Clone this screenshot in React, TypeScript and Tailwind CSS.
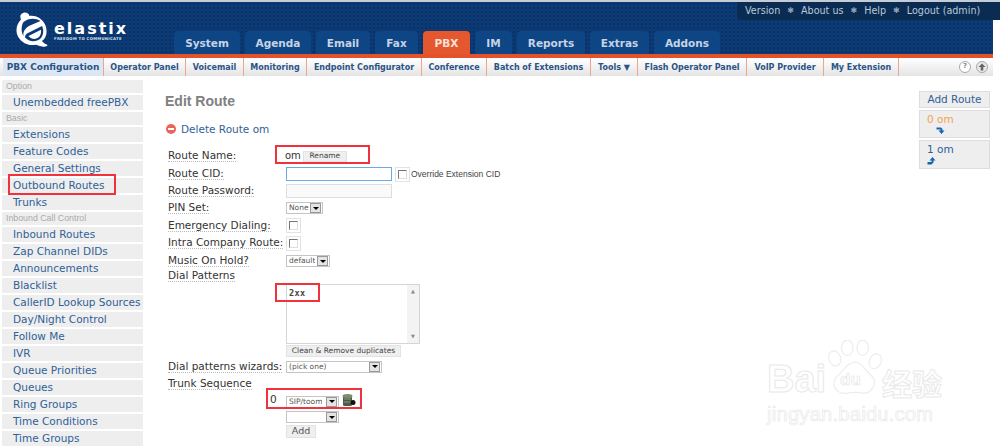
const font = { fontFamily: '"DejaVu Sans", Verdana, sans-serif' };

const tabs = [
  { t: "System", w: "w-[66px]" },
  { t: "Agenda", w: "w-[66px]" },
  { t: "Email", w: "w-[54px]" },
  { t: "Fax", w: "w-[43px]" },
  { t: "PBX", w: "w-[47px]", on: true },
  { t: "IM", w: "w-[37px]" },
  { t: "Reports", w: "w-[68px]" },
  { t: "Extras", w: "w-[59px]" },
  { t: "Addons", w: "w-[66px]" },
];

const subnav = [
  { t: "PBX Configuration", w: "w-[101px]", on: true },
  { t: "Operator Panel", w: "w-[82px]" },
  { t: "Voicemail", w: "w-[58px]" },
  { t: "Monitoring", w: "w-[63px]" },
  { t: "Endpoint Configurator", w: "w-[115px]" },
  { t: "Conference", w: "w-[65px]" },
  { t: "Batch of Extensions", w: "w-[104px]" },
  { t: "Tools ▼", w: "w-[47px]" },
  { t: "Flash Operator Panel", w: "w-[109px]" },
  { t: "VoIP Provider", w: "w-[77px]" },
  { t: "My Extension", w: "w-[75px]" },
];

type Side = { t: string; h?: boolean };
const side: Side[] = [
  { t: "Option", h: true },
  { t: "Unembedded freePBX" },
  { t: "Basic", h: true },
  { t: "Extensions" },
  { t: "Feature Codes" },
  { t: "General Settings" },
  { t: "Outbound Routes" },
  { t: "Trunks" },
  { t: "Inbound Call Control", h: true },
  { t: "Inbound Routes" },
  { t: "Zap Channel DIDs" },
  { t: "Announcements" },
  { t: "Blacklist" },
  { t: "CallerID Lookup Sources" },
  { t: "Day/Night Control" },
  { t: "Follow Me" },
  { t: "IVR" },
  { t: "Queue Priorities" },
  { t: "Queues" },
  { t: "Ring Groups" },
  { t: "Time Conditions" },
  { t: "Time Groups" },
];

function Logo() {
  return (
    <div className="flex items-start ml-[16px] mt-[10px] h-[36px]">
      <svg width="32" height="35" viewBox="0 0 32 35" className="shrink-0">
        <path d="M6 1.500 C9 -0.500 13 1 13.500 4 C21 3 28 8 30 15 C31.500 21 30 26 26 29 C27 31 30 32 31.500 33 C31.500 34.500 29 35 26 34.500 C24 34.300 22 33.500 20 32.700 C12 34.500 3.500 30 1 22 C-0.500 16 1.500 11 5 7.500 C4 5 4 3 6 1.500Z" fill="#ffffff" />
        <path d="M7.500 10 C5 14 5 20 7.500 24 C6.500 19 10 15.500 14 13.500 L24.500 9 C19.500 5.500 12 6 7.500 10Z" fill="#0c3a76" />
        <path d="M9 25.500 C13 30 20 30.500 24.500 26.500 C27.500 23.500 28 18 26 14 L11 21.500 C9.800 22.300 9 23.500 9 25.500Z" fill="#0c3a76" />
        <path d="M12.500 24 L25 17.800 C25.500 21 24.500 24 22 25.800 C19 27.800 15 27 12.500 24Z" fill="#ffffff" />
      </svg>
      <div className="ml-[6px] mt-[9px] flex flex-col text-white">
        <div className="text-[16px] font-bold leading-[15px] tracking-[2px]">elastix</div>
        <div className="text-[3.8px] font-bold leading-[5px] tracking-[0.3px] text-[#d5e0ee] whitespace-nowrap">FREEDOM TO COMMUNICATE</div>
      </div>
    </div>
  );
}

function Select({ w, text }: { w: string; text: string }) {
  return (
    <div className={`${w} h-[12px] flex items-center justify-between border border-[#c4c4c4] bg-white pl-[2px] text-[7.5px] text-[#555] whitespace-nowrap`}>
      <span className="overflow-hidden">{text}</span>
      <span className="w-[11px] h-[10px] shrink-0 mr-px border border-[#999] bg-[#e4e4e4] flex items-center justify-center">
        <span className="w-0 h-0 border-x-[3px] border-x-transparent border-t-[3px] border-t-black" />
      </span>
    </div>
  );
}

function Box() {
  return (
    <span className="w-[15px] h-[15px] border border-[#e2e2e2] flex items-center justify-center bg-white">
      <span className="w-[9px] h-[9px] border border-t-[#777] border-l-[#777] border-r-[#ddd] border-b-[#ddd] bg-white" />
    </span>
  );
}

function Label({ children }: { children: string }) {
  return <span className="border-b border-dotted border-[#bbb] leading-[12px] text-[#333]">{children}</span>;
}

function Row({ h, label, children }: { h: string; label?: string; children?: React.ReactNode }) {
  return (
    <div className={`${h} flex items-center`}>
      <div className="w-[118px] shrink-0 whitespace-nowrap">{label && <Label>{label}</Label>}</div>
      {children}
    </div>
  );
}

function Paw() {
  return (
    <svg width="54" height="58" viewBox="0 0 56 60" className="absolute left-0 top-0" fill="none" stroke="#ececec" strokeWidth="1.2">
      <ellipse cx="7" cy="19" rx="6" ry="8" transform="rotate(-20 7 19)" />
      <ellipse cx="20" cy="8" rx="6" ry="8" />
      <ellipse cx="36" cy="8" rx="6" ry="8" />
      <ellipse cx="49" cy="22" rx="6" ry="8" transform="rotate(25 49 22)" />
      <path d="M28 23 C36 23 38 32 45 37 C52 43 46 56 36 55 C30 54 25 54 20 55 C9 57 2 46 9 38 C16 33 19 23 28 23Z" />
    </svg>
  );
}

export default function App() {
  return (
    <div className="relative w-[1000px] h-[447px] overflow-hidden bg-white" style={font}>
      {/* header */}
      <div className="w-[993px]">
        <div className="h-[2px] w-[1000px] bg-[#c5ccd6]" />
        <div className="h-[52px] flex bg-[#0c3a76] bg-[radial-gradient(#0a3162_1px,transparent_1px)] bg-[length:4px_4px]">
          <div className="w-[174px] shrink-0"><Logo /></div>
          <div className="flex items-end gap-[5px] self-end">
            {tabs.map((x) => (
              <div
                key={x.t}
                className={`${x.w} h-[23px] rounded-t-[4px] flex items-center justify-center pt-[3px] text-[10.5px] font-bold ${
                  x.on ? "bg-[#e4572f] text-[#fbe2d6]" : "bg-[#0e4585] text-[#c6d4e4]"
                }`}
              >
                {x.t}
              </div>
            ))}
          </div>
        </div>
        <div className="h-[4px] bg-[#e4522c]" />
        <div className="h-[18px] flex bg-[linear-gradient(#ffffff,#e4e4e4)]">
          <div className="w-[3px]" />
          {subnav.map((x) => (
            <div
              key={x.t}
              className={`${x.w} h-[18px] pt-[1px] shrink-0 flex items-center justify-center whitespace-nowrap border-r border-[#f0a48e] font-bold text-[#2a5487] ${
                x.on ? "bg-[#dce7f3] text-[9px]" : "text-[8px]"
              }`}
            >
              {x.t}
            </div>
          ))}
          <div className="flex-1 flex items-center justify-end gap-[5px] pr-[5px] pb-[1px]">
            <span className="w-[12px] h-[12px] rounded-full border border-[#aaa] bg-white flex items-center justify-center text-[7px] font-bold leading-none text-[#888]">?</span>
            <span className="w-[12px] h-[12px] rounded-full border border-[#aaa] bg-[#e8e8e8] flex items-center justify-center">
              <svg width="8" height="8" viewBox="0 0 8 8"><path d="M4 0.500 L7.500 4 H5.300 V7.500 H2.700 V4 H0.500Z" fill="#666" /></svg>
            </span>
          </div>
        </div>
      </div>

      {/* top-right menu */}
      <div className="absolute right-0 top-[2px] w-[263px] h-[18px] bg-[#0a2c52] rounded-bl-[5px] flex items-center pl-[8px] gap-[7px] text-[9.6px] text-[#b8c9dc]">
        <span>Version</span><span className="text-[8px] text-[#8fa3b8]">✱</span>
        <span>About us</span><span className="text-[8px] text-[#8fa3b8]">✱</span>
        <span>Help</span><span className="text-[8px] text-[#8fa3b8]">✱</span>
        <span>Logout (admin)</span>
      </div>

      {/* body */}
      <div className="flex">
        <aside className="w-[141px] ml-[2px] pt-[4px] shrink-0 flex flex-col gap-[2px]">
          {side.map((x) =>
            x.h ? (
              <div key={x.t} className="h-[13px] bg-[#eeeeee] pl-[4px] flex items-center text-[8.8px] font-['Liberation_Sans'] text-[#aaa] whitespace-nowrap">{x.t}</div>
            ) : (
              <div key={x.t} className="h-[15px] bg-[#eeeeee] pl-[11px] pt-[1px] flex items-center text-[10.5px] text-[#2f6197] whitespace-nowrap">{x.t}</div>
            )
          )}
        </aside>

        <main className="flex-1 pl-[25px] pt-[16px]">
          <h1 className="text-[14px] leading-[18px] font-bold text-[#808080] font-['Liberation_Sans'] -ml-[3px]">Edit Route</h1>
          <div className="mt-[13px] flex items-center h-[14px] text-[10.5px] text-[#2f6197] -ml-[2px]">
            <span className="w-[10px] h-[10px] rounded-full bg-[#e8655a] flex items-center justify-center -mt-[2px] mr-[5px]">
              <span className="w-[6px] h-[2px] bg-white" />
            </span>
            Delete Route om
          </div>

          <div className="mt-[10px] text-[10.5px] text-[#333]">
            <Row h="h-[18px]" label="Route Name:">
              <span className="-ml-[1px] -mt-[1px] mr-[2px] text-[10px] text-[#333]">om</span>
              <span className="h-[11px] w-[44px] bg-[#efefef] border border-[#e2e2e2] flex items-center justify-center text-[7.5px] text-[#444]">Rename</span>
            </Row>
            <Row h="h-[18px]" label="Route CID:">
              <span className="w-[106px] h-[14px] border border-[#6aa9e2] bg-white" />
              <span className="ml-[3px] mr-[1px]"><Box /></span>
              <span className="text-[8.5px] font-['Liberation_Sans'] text-[#444] whitespace-nowrap">Override Extension CID</span>
            </Row>
            <Row h="h-[16px]" label="Route Password:">
              <span className="w-[106px] h-[14px] border border-[#dedede] bg-[#fafafa]" />
            </Row>
            <Row h="h-[18px]" label="PIN Set:">
              <Select w="w-[37px]" text="None" />
            </Row>
            <Row h="h-[17px]" label="Emergency Dialing:"><Box /></Row>
            <Row h="h-[18px]" label="Intra Company Route:"><Box /></Row>
            <Row h="h-[18px]" label="Music On Hold?">
              <Select w="w-[44px]" text="default" />
            </Row>
            <Row h="h-[12px]" label="Dial Patterns" />
            <div className="pl-[118px] flex flex-col">
              <div className="w-[134px] h-[60px] border border-[#d5d5d5] flex justify-between bg-white mt-[2px]">
                <span className="pl-[2px] pt-[2px] text-[8.5px] font-bold tracking-[0.4px] text-[#444] font-['DejaVu_Sans_Mono']">2xx</span>
                <span className="w-[12px] bg-[#f3f3f3] flex flex-col justify-between items-center py-[4px] text-[5px] leading-none text-[#888]">
                  <span>▲</span><span>▼</span>
                </span>
              </div>
              <span className="mt-[1px] w-[115px] h-[12px] bg-[#efefef] border border-[#e2e2e2] flex items-center justify-center text-[7.5px] text-[#444] whitespace-nowrap">Clean &amp; Remove duplicates</span>
            </div>
            <Row h="h-[19px]" label="Dial patterns wizards:">
              <Select w="w-[96px]" text="(pick one)" />
            </Row>
            <Row h="h-[15px]" label="Trunk Sequence" />
            <div className="flex items-center h-[15px] mt-[3px] pl-[102px]">
              <span className="w-[16px] -mt-[3px] text-[10.5px]">0</span>
              <Select w="w-[53px]" text="SIP/toom" />
              <svg width="14" height="14" viewBox="0 0 14 14" className="ml-[3px] -mt-[3px]">
                <rect x="1" y="3" width="9" height="10" rx="1.5" fill="#4d5d45" />
                <ellipse cx="5.500" cy="3" rx="5" ry="2" fill="#7d8d72" />
                <path d="M2 6h7M2 9h7" stroke="#aab5a0" strokeWidth="0.7" />
                <circle cx="11" cy="9.500" r="2.500" fill="#111" />
              </svg>
            </div>
            <div className="pl-[118px] mt-[2px] h-[13px]">
              <Select w="w-[53px]" text="" />
            </div>
            <div className="pl-[118px] mt-[1px]">
              <span className="w-[30px] h-[13px] bg-[#efefef] border border-[#e2e2e2] flex items-center justify-center text-[9.5px] text-[#555]">Add</span>
            </div>
          </div>
        </main>

        <aside className="w-[71px] mr-[10px] pt-[15px] shrink-0 flex flex-col text-[10.5px]">
          <div className="h-[17px] bg-[#eeeeee] border border-[#dddddd] flex items-center justify-center text-[#2f6197] whitespace-nowrap">Add Route</div>
          <div className="mt-[2px] h-[28px] bg-[#eeeeee] border border-[#dddddd] pl-[7px] pt-[1px] leading-[14px] text-[#f4a24c]">
            0 om
            <svg width="9" height="7" viewBox="0 0 9 7" className="ml-[9px] mt-[1px] block"><path d="M0.500 0.500 H5 L6.500 2 V3.500 H8.500 L5.500 7 L2.500 3.500 H4.500 V2.500 H0.500Z" fill="#1565b5" /></svg>
          </div>
          <div className="mt-[2px] h-[29px] bg-[#eeeeee] border border-[#dddddd] pl-[7px] pt-[1px] leading-[14px] text-[#2f6197]">
            1 om
            <svg width="9" height="8" viewBox="0 0 9 8" className="mt-[1px] block"><path d="M0.500 7.500 H4.500 L6.500 5.500 V3.500 H8.500 L5.500 0 L2.500 3.500 H4.500 V5 H0.500Z" fill="#1565b5" /></svg>
          </div>
        </aside>
      </div>

      {/* red annotations */}
      <div className="absolute left-[8px] top-[174px] w-[108px] h-[21px] border-2 border-[#f0323c]" />
      <div className="absolute left-[275px] top-[145px] w-[95px] h-[19px] border-2 border-[#f0323c]" />
      <div className="absolute left-[275px] top-[283px] w-[45px] h-[19px] border-2 border-[#f0323c]" />
      <div className="absolute left-[266px] top-[388px] w-[96px] h-[21px] border-2 border-[#f0323c]" />

      {/* watermark */}
      <div className="absolute left-[766px] top-[340px] w-[190px] h-[90px] pointer-events-none">
        <span className="absolute left-[1px] top-[18px] text-[38px] font-bold leading-[42px] text-transparent [-webkit-text-stroke:1px_#e9e9e9] font-['Liberation_Sans']">Bai</span>
        <div className="absolute left-[62px] top-0 w-[54px] h-[58px]">
          <Paw />
          <span className="absolute left-[12px] top-[30px] text-[17px] font-bold leading-[20px] text-transparent [-webkit-text-stroke:0.7px_#e6e6e6] font-['Liberation_Sans']">du</span>
        </div>
        <span className="absolute left-[116px] top-[26px] text-[30px] font-bold leading-[32px] text-transparent [-webkit-text-stroke:1px_#e9e9e9] font-['Noto_Sans_CJK_SC'] whitespace-nowrap">经验</span>
        <span className="absolute left-[1px] top-[62px] text-[20px] leading-[24px] text-transparent [-webkit-text-stroke:0.7px_#e9e9e9] font-['Liberation_Sans'] whitespace-nowrap tracking-[0.3px]">jingyan.baidu.com</span>
      </div>
    </div>
  );
}
